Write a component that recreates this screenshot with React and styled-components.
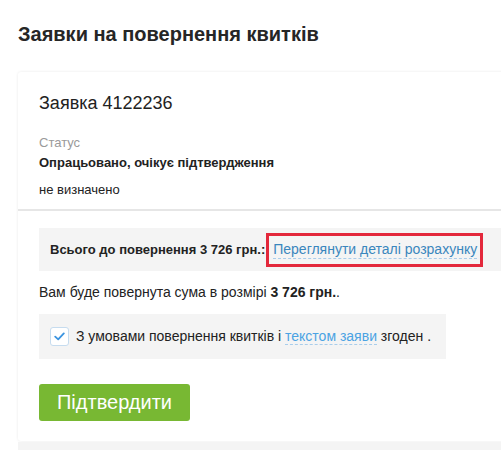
import React from "react";
import styled, { createGlobalStyle } from "styled-components";

const Global = createGlobalStyle`
  html, body { margin: 0; padding: 0; background: #fff; overflow: hidden; }
  body { font-family: "Liberation Sans", Arial, sans-serif; color: #222; }
`;

const Page = styled.div`
  padding: 21px 0 0 18px;
  width: 501px;
  height: 450px;
  box-sizing: border-box;
  display: flex;
  flex-direction: column;
`;

const Title = styled.h1`
  margin: 0;
  font-size: 20px;
  line-height: 26px;
  font-weight: bold;
  color: #262626;
`;

const Card = styled.div`
  margin-top: 25px;
  margin-right: -12px;
  background: #fff;
  border-radius: 3px;
  box-shadow: 0 0 3px rgba(0, 0, 0, 0.09);
`;

const Section = styled.div`
  padding: ${(p) => p.$pad};
  display: flex;
  flex-direction: column;
  align-items: flex-start;
  border-bottom: ${(p) => (p.$divider ? "2px solid #e6e6e6" : "none")};
`;

const OrderTitle = styled.div`
  font-size: 18px;
  line-height: 22px;
  color: #222;
  margin-bottom: 20px;
`;

const Label = styled.div`
  font-size: 13px;
  line-height: 18px;
  color: #9a9a9a;
`;

const Status = styled.div`
  font-size: 13px;
  line-height: 18px;
  font-weight: bold;
  margin-top: 2px;
`;

const Plain = styled.div`
  font-size: 13px;
  line-height: 18px;
  margin-top: 9px;
`;

const TotalBox = styled.div`
  align-self: stretch;
  background: #f4f4f4;
  height: 43px;
  padding-left: 11px;
  display: flex;
  align-items: center;
  font-size: 13px;
  font-weight: bold;
  color: #222;
`;

const Highlight = styled.span`
  margin-left: 1px;
  border: 3px solid #e3283b;
  padding: 5px 3px 5px 4px;
  display: inline-flex;
  align-items: center;
`;

const DashedLink = styled.span`
  color: ${(p) => p.$color};
  font-weight: normal;
  font-size: 14px;
  border-bottom: 1px dashed #a9cdeb;
  line-height: 17px;
`;

const Refund = styled.div`
  font-size: 14px;
  line-height: 18px;
  margin-top: 12px;
  b { font-weight: bold; }
`;

const AgreeBox = styled.label`
  margin-top: 13px;
  background: #f4f4f4;
  width: 407px;
  height: 45px;
  box-sizing: border-box;
  padding-left: 11px;
  display: flex;
  align-items: center;
  font-size: 14px;
  color: #222;
`;

const Check = styled.span`
  width: 19px;
  height: 19px;
  box-sizing: border-box;
  background: #fff;
  border: 1px solid #c6dcef;
  border-radius: 3px;
  display: inline-flex;
  align-items: center;
  justify-content: center;
  margin-right: 7px;
  flex-shrink: 0;
`;

const Button = styled.button`
  margin-top: 25px;
  width: 151px;
  height: 37px;
  border: none;
  border-radius: 3px;
  background: #78b833;
  color: #fff;
  font-family: "Liberation Sans", Arial, sans-serif;
  font-size: 20px;
  cursor: pointer;
  padding: 0;
`;

const BottomStrip = styled.div`
  margin-top: 1px;
  margin-right: -12px;
  height: 12px;
  background: #f4f4f4;
`;

export default function App() {
  return (
    <>
      <Global />
      <Page>
        <Title>Заявки на повернення квитків</Title>
        <Card>
          <Section $pad="20px 21px 10px 21px" $divider>
            <OrderTitle>Заявка 4122236</OrderTitle>
            <Label>Статус</Label>
            <Status>Опрацьовано, очікує підтвердження</Status>
            <Plain>не визначено</Plain>
          </Section>
          <Section $pad="17px 0 20px 21px">
            <TotalBox>
              Всього до повернення 3 726 грн.:
              <Highlight>
                <DashedLink $color="#3a86bd">Переглянути деталі розрахунку</DashedLink>
              </Highlight>
            </TotalBox>
            <Refund>
              Вам буде повернута сума в розмірі <b>3 726 грн.</b>.
            </Refund>
            <AgreeBox>
              <Check>
                <svg width="11" height="9" viewBox="0 0 11 9">
                  <path d="M1.2 4.6 L4.2 7.4 L9.8 1.4" fill="none" stroke="#3b94e0" strokeWidth="1.8" strokeLinecap="round" strokeLinejoin="round" />
                </svg>
              </Check>
              <span>
                З умовами повернення квитків і{" "}
                <DashedLink $color="#4ba3e3">текстом заяви</DashedLink> згоден .
              </span>
            </AgreeBox>
            <Button>Підтвердити</Button>
          </Section>
        </Card>
        <BottomStrip />
      </Page>
    </>
  );
}
